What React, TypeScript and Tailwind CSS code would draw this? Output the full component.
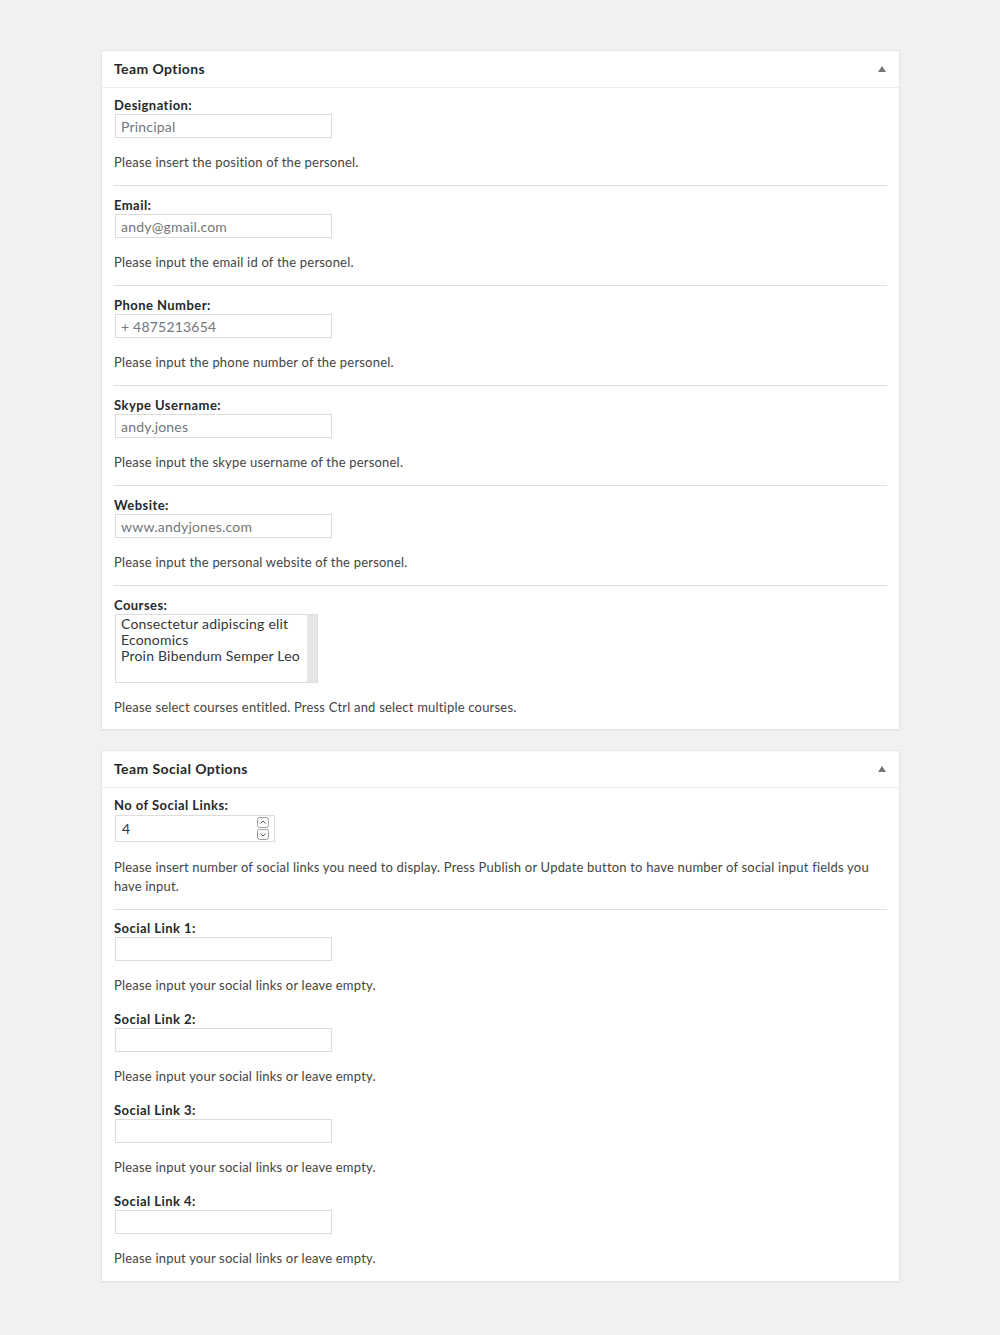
import React from 'react'

const font = { fontFamily: 'Lato, "Liberation Sans", sans-serif' }

function Header({ title }: { title: string }) {
  return (
    <div className="flex items-center justify-between h-[37px] px-3 pb-[1px] border-b border-[#eeeeee]">
      <h2 className="text-[14px] font-bold tracking-[0.4px] text-[#23282d]">{title}</h2>
      <svg width="8" height="6" viewBox="0 0 8 6" className="mr-[1px]">
        <path d="M4 0L8 6H0z" fill="#72777c" />
      </svg>
    </div>
  )
}

function Label({ children, className = '' }: { children: React.ReactNode; className?: string }) {
  return (
    <div className={`text-[13px] leading-[18px] font-bold tracking-[0.45px] text-[#23282d] ${className}`}>{children}</div>
  )
}

function Desc({ children, className = '' }: { children: React.ReactNode; className?: string }) {
  return <p className={`text-[13px] leading-[18px] tracking-[0.2px] text-[#444444] ${className}`}>{children}</p>
}

function Field({ label, value, desc }: { label: string; value: string; desc: string }) {
  return (
    <div className="pt-[10px] pb-[14px] border-b border-[#dddddd]">
      <Label>{label}</Label>
      <input
        readOnly
        value={value}
        className="block ml-px w-[217px] h-[24px] border border-[#dddddd] px-[5px] text-[14px] tracking-[0.2px] text-[#72777c] outline-none bg-white"
      />
      <Desc className="mt-[15px]">{desc}</Desc>
    </div>
  )
}

function SocialField({ n }: { n: number }) {
  return (
    <div className="pt-[9px] pb-[7px]">
      <Label>Social Link {n}:</Label>
      <input
        readOnly
        className="block ml-px w-[217px] h-[24px] border border-[#dddddd] px-[6px] text-[14px] outline-none bg-white"
      />
      <Desc className="mt-[15px]">Please input your social links or leave empty.</Desc>
    </div>
  )
}

export default function App() {
  const fields = [
    { label: 'Designation:', value: 'Principal', desc: 'Please insert the position of the personel.' },
    { label: 'Email:', value: 'andy@gmail.com', desc: 'Please input the email id of the personel.' },
    { label: 'Phone Number:', value: '+ 4875213654', desc: 'Please input the phone number of the personel.' },
    { label: 'Skype Username:', value: 'andy.jones', desc: 'Please input the skype username of the personel.' },
    { label: 'Website:', value: 'www.andyjones.com', desc: 'Please input the personal website of the personel.' },
  ]

  return (
    <div className="min-h-[1335px] bg-[#f1f1f1] pt-[50px] pb-[52px]" style={font}>
      <div className="w-[799px] ml-[101px] bg-white border border-[#e5e5e5] shadow-[0_1px_1px_rgba(0,0,0,0.04)]">
        <Header title="Team Options" />
        <div className="px-3 -mt-[2px]">
          {fields.map(f => (
            <Field key={f.label} {...f} />
          ))}
          <div className="pt-[10px] pb-[13px]">
            <Label>Courses:</Label>
            <div className="flex ml-px w-[203px] h-[69px] border border-[#dddddd] bg-white">
              <div className="flex-1 px-[5px] pt-[1px] text-[14px] leading-[16px] tracking-[0.2px] whitespace-nowrap text-[#32373c]">
                <div>Consectetur adipiscing elit</div>
                <div>Economics</div>
                <div>Proin Bibendum Semper Leo</div>
              </div>
              <div className="w-[10px] bg-[#e6e6e6]" />
            </div>
            <Desc className="mt-[15px]">Please select courses entitled. Press Ctrl and select multiple courses.</Desc>
          </div>
        </div>
      </div>

      <div className="w-[799px] ml-[101px] mt-[20px] bg-white border border-[#e5e5e5] shadow-[0_1px_1px_rgba(0,0,0,0.04)]">
        <Header title="Team Social Options" />
        <div className="px-3">
          <div className="pt-[8px] pb-[13px] border-b border-[#dddddd]">
            <Label className="mb-px">No of Social Links:</Label>
            <div className="flex items-center ml-px w-[160px] h-[27px] border border-[#dddddd] bg-white pl-[6px] pr-[5px]">
              <span className="flex-1 text-[14px] text-[#32373c]">4</span>
              <div className="flex flex-col gap-px">
                <svg width="12" height="11" viewBox="0 0 12 11">
                  <rect x="0.5" y="0.5" width="11" height="10" rx="2" fill="#fafafa" stroke="#a0a0a0" />
                  <path d="M3.5 6.5L6 4l2.5 2.5" fill="none" stroke="#555" strokeWidth="1" />
                </svg>
                <svg width="12" height="11" viewBox="0 0 12 11">
                  <rect x="0.5" y="0.5" width="11" height="10" rx="2" fill="#fafafa" stroke="#a0a0a0" />
                  <path d="M3.5 4.5L6 7l2.5-2.5" fill="none" stroke="#555" strokeWidth="1" />
                </svg>
              </div>
            </div>
            <p className="mt-[16px] text-[13px] leading-[19px] tracking-[0.2px] text-[#444444]">
              Please insert number of social links you need to display. Press Publish or Update button to have number of social input fields you have input.
            </p>
          </div>
          <div className="pb-[7px]">
            {[1, 2, 3, 4].map(n => (
              <SocialField key={n} n={n} />
            ))}
          </div>
        </div>
      </div>
    </div>
  )
}
